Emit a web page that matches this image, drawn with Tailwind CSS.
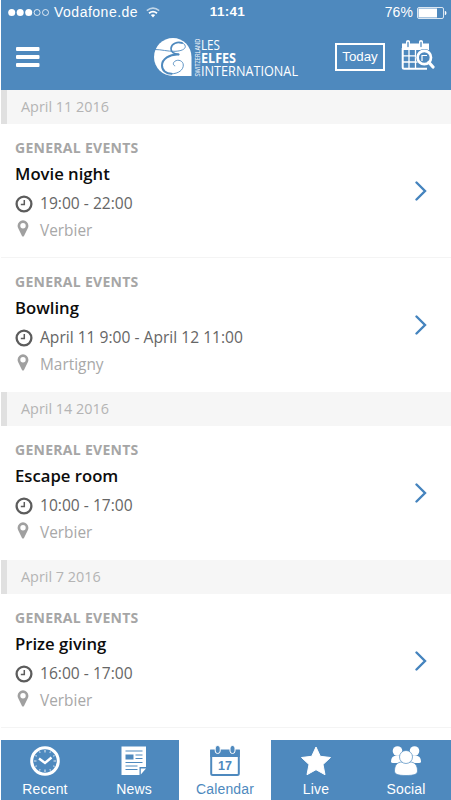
<!DOCTYPE html>
<html lang="en">
<head>
    <meta charset="UTF-8">
    <meta name="viewport" content="width=device-width, initial-scale=1.0">
    <title>Les Elfes - Calendar</title>
    <script src="https://cdn.jsdelivr.net/npm/@tailwindcss/browser@4"></script>
</head>

<body class="bg-white">

    <!-- shared icons -->
    <svg class="hidden">
        <symbol id="clock" viewBox="0 0 18 18">
            <circle cx="9" cy="9" r="7.4" fill="none" stroke="currentColor" stroke-width="2.3"/>
            <path d="M9.3 5v4.6H5.8" fill="none" stroke="currentColor" stroke-width="1.5"/>
        </symbol>
        <symbol id="pin" viewBox="0 0 12 17">
            <path fill="currentColor" fill-rule="evenodd" d="M6 .3a5.400 5.400 0 0 0-5.400 5.400c0 1 .2 1.700.5 2.400L5 15.900c.4.8 1.600.8 2 0l3.900-7.800c.3-.7.5-1.400.5-2.400A5.400 5.400 0 0 0 6 .3zM6 3a2.700 2.700 0 1 1 0 5.400A2.700 2.700 0 0 1 6 3z"/>
        </symbol>
        <symbol id="chevron" viewBox="0 0 12 20">
            <path d="M1.500 1.500 10 10l-8.500 8.500" fill="none" stroke="currentColor" stroke-width="2.400" stroke-linecap="round"/>
        </symbol>
    </svg>

    <div class="w-[451px] h-[800px] pl-px flex flex-col overflow-hidden bg-white font-['Open_Sans',sans-serif] whitespace-nowrap">

        <!-- Header -->
        <header class="h-[90px] shrink-0 bg-[#4e89be] text-white">
            <div class="h-[25px] grid grid-cols-3 items-center pl-[7px] pr-1 font-['Liberation_Sans',sans-serif] text-[14px]">
                <div class="flex items-center">
                    <svg class="w-[42px] h-[9px] shrink-0" viewBox="0 0 42 9" fill="white">
                        <circle cx="3.700" cy="4.500" r="3.500"/>
                        <circle cx="12.200" cy="4.500" r="3.500"/>
                        <circle cx="20.700" cy="4.500" r="3.500"/>
                        <circle cx="29.100" cy="4.500" r="3" fill="none" stroke="white" stroke-width=".8"/>
                        <circle cx="37.500" cy="4.500" r="3" fill="none" stroke="white" stroke-width=".8"/>
                    </svg>
                    <span class="ml-1 tracking-[0.5px]">Vodafone.de</span>
                    <svg class="ml-2 w-[14px] h-[11px] shrink-0" viewBox="0 0 14 11" fill="none" stroke="white">
                        <path d="M.8 3.700Q7-1.300 13.200 3.700" stroke-width="1.600" opacity=".65"/>
                        <path d="M3 6.200q4-3.200 8 0" stroke-width="1.800"/>
                        <path d="M4.800 8.100q2.200-1.600 4.400 0L7 10.500z" fill="white" stroke="none"/>
                    </svg>
                </div>
                <div class="text-center font-bold text-[13.500px] tracking-[0.3px]">11:41</div>
                <div class="flex items-center justify-end">
                    <span class="tracking-[0.1px]">76%</span>
                    <svg class="ml-1 w-[30px] h-[12px]" viewBox="0 0 30 12">
                        <rect x=".5" y=".5" width="26" height="11" rx="1.500" fill="none" stroke="white" stroke-width=".8"/>
                        <rect x="1.500" y="1.500" width="18.500" height="9" fill="white"/>
                        <path d="M27.800 3.800q1.700.5 1.700 2.200t-1.700 2.200z" fill="white"/>
                    </svg>
                </div>
            </div>
            <div class="h-[65px] flex items-start">
                <svg class="ml-[15px] mt-[22px] w-[24px] h-[21px] shrink-0" viewBox="0 0 24 21" fill="white">
                    <rect y="0" width="23.500" height="4" rx="1"/>
                    <rect y="8" width="23.500" height="4" rx="1"/>
                    <rect y="16" width="23.500" height="4" rx="1"/>
                </svg>
                <!-- Logo -->
                <svg class="ml-[112px] mt-[11px] w-[148px] h-[42px] shrink-0 overflow-visible" viewBox="152 36 148 42">
                    <path fill="white" d="M173 38a19 19 0 0 0 0 38h18.500V57A18.500 19 0 0 0 173 38z"/>
                    <g fill="none" stroke="#4e89be" stroke-linecap="round">
                        <path d="M155 49.500c7 0 12 2 20 1.800 6-.2 10.500-2 10.300-5-.2-2.500-3-3.800-6-3.600" stroke-width=".9"/>
                        <path d="M182 42.900c-4.500-1.300-10.500.5-11 5.500-.3 3.500 3 5.800 7.500 6" stroke-width="1.700"/>
                        <path d="M178.500 54.500c-9-.5-16.500 4.700-16.500 11 0 5 4 8.300 9.500 8.300" stroke-width="2"/>
                        <path d="M171.500 73.800c7 0 12-4 11.800-8.800-.2-4.300-5-6-8.500-3.700-2 1.500-2 4 0 4.500" stroke-width=".9"/>
                    </g>
                    <g fill="white" font-family="Open Sans, sans-serif">
                        <text transform="translate(199.500 76.500) rotate(-90)" font-size="8" textLength="38" lengthAdjust="spacingAndGlyphs">SWITZERLAND</text>
                        <text x="201" y="50" font-size="13.800" textLength="19" lengthAdjust="spacingAndGlyphs">LES</text>
                        <text x="201" y="62.800" font-size="13.800" font-weight="700" textLength="35" lengthAdjust="spacingAndGlyphs">ELFES</text>
                        <text x="201" y="76" font-size="13.800" textLength="97" lengthAdjust="spacingAndGlyphs">INTERNATIONAL</text>
                    </g>
                </svg>
                <div class="ml-[35px] mt-[18px] w-[50px] h-[28px] border-2 border-white flex items-center justify-center font-['Liberation_Sans',sans-serif] text-[13.300px]">Today</div>
                <svg class="ml-4 mt-[14px] w-[34px] h-[32px] shrink-0" viewBox="401 39 34 32" fill="none" stroke="white">
                    <path d="M402.700 48v19.200q0 1.500 1.500 1.500H427" stroke-width="2"/>
                    <path d="M402 43.500h4v-2q0-1.500 2-1.500t2 1.500v2h9v-2q0-1.500 2-1.500t2 1.500v2h6v6.500h-27z" fill="white" stroke="none"/>
                    <path d="M408 42.500v4M421 42.500v4" stroke="#4e89be" stroke-width="1.300" stroke-linecap="round"/>
                    <path d="M409 50v18M415.500 50v18M403 55.800h16M403 62h16" stroke-width="1.300"/>
                    <circle cx="424.300" cy="57.500" r="8.500" fill="#4e89be" stroke="none"/>
                    <circle cx="424.300" cy="57.500" r="6.700" stroke-width="2.700"/>
                    <path d="M422 61v-5.500h5" stroke-width="1.200"/>
                    <path d="m429 62.500 4 4.500" stroke-width="3.200" stroke-linecap="round"/>
                </svg>
            </div>
        </header>

        <!-- Event list -->
        <main class="h-[650px] shrink-0 overflow-hidden">
            <div class="h-[34px] bg-[#f6f6f6] border-l-6 border-[#e0e0e0] pl-[14px] flex items-center text-[14.400px] text-[#b4b4b4]">April 11 2016</div>
            <div class="h-[134px] pl-[14px] pr-6 flex items-center justify-between border-b border-[#f4f4f4]">
                <div class="h-full pt-[11px]">
                    <p class="h-[26px] leading-[25px] text-[14px] tracking-[0.280px] font-bold text-[#a6a6a6]">GENERAL EVENTS</p>
                    <p class="h-[26px] leading-[26px] text-[16.700px] font-semibold text-[#0c0c0c]">Movie night</p>
                    <p class="mt-[4px] h-[26px] flex items-center text-[15.600px] text-[#666]"><svg class="w-[18px] h-[18px] mr-[7px] mb-px text-[#5c5c5c]"><use href="#clock"/></svg>19:00 - 22:00</p>
                    <p class="h-[27px] flex items-center text-[15.400px] text-[#a8a8a8]"><svg class="w-3 h-[17px] ml-[2px] mr-[11px] mb-[5px] text-[#a0a0a0]"><use href="#pin"/></svg>Verbier</p>
                </div>
                <svg class="w-3 h-5 text-[#4584be]"><use href="#chevron"/></svg>
            </div>
            <div class="h-[134px] pl-[14px] pr-6 flex items-center justify-between">
                <div class="h-full pt-[11px]">
                    <p class="h-[26px] leading-[25px] text-[14px] tracking-[0.280px] font-bold text-[#a6a6a6]">GENERAL EVENTS</p>
                    <p class="h-[26px] leading-[26px] text-[16.700px] font-semibold text-[#0c0c0c]">Bowling</p>
                    <p class="mt-[4px] h-[26px] flex items-center text-[15.600px] text-[#666]"><svg class="w-[18px] h-[18px] mr-[7px] mb-px text-[#5c5c5c]"><use href="#clock"/></svg>April 11 9:00 - April 12 11:00</p>
                    <p class="h-[27px] flex items-center text-[15.400px] text-[#a8a8a8]"><svg class="w-3 h-[17px] ml-[2px] mr-[11px] mb-[5px] text-[#a0a0a0]"><use href="#pin"/></svg>Martigny</p>
                </div>
                <svg class="w-3 h-5 text-[#4584be]"><use href="#chevron"/></svg>
            </div>

            <div class="h-[34px] bg-[#f6f6f6] border-l-6 border-[#e0e0e0] pl-[14px] flex items-center text-[14.400px] text-[#b4b4b4]">April 14 2016</div>
            <div class="h-[134px] pl-[14px] pr-6 flex items-center justify-between">
                <div class="h-full pt-[11px]">
                    <p class="h-[26px] leading-[25px] text-[14px] tracking-[0.280px] font-bold text-[#a6a6a6]">GENERAL EVENTS</p>
                    <p class="h-[26px] leading-[26px] text-[16.700px] font-semibold text-[#0c0c0c]">Escape room</p>
                    <p class="mt-[4px] h-[26px] flex items-center text-[15.600px] text-[#666]"><svg class="w-[18px] h-[18px] mr-[7px] mb-px text-[#5c5c5c]"><use href="#clock"/></svg>10:00 - 17:00</p>
                    <p class="h-[27px] flex items-center text-[15.400px] text-[#a8a8a8]"><svg class="w-3 h-[17px] ml-[2px] mr-[11px] mb-[5px] text-[#a0a0a0]"><use href="#pin"/></svg>Verbier</p>
                </div>
                <svg class="w-3 h-5 text-[#4584be]"><use href="#chevron"/></svg>
            </div>

            <div class="h-[34px] bg-[#f6f6f6] border-l-6 border-[#e0e0e0] pl-[14px] flex items-center text-[14.400px] text-[#b4b4b4]">April 7 2016</div>
            <div class="h-[134px] pl-[14px] pr-6 flex items-center justify-between border-b border-[#f4f4f4]">
                <div class="h-full pt-[11px]">
                    <p class="h-[26px] leading-[25px] text-[14px] tracking-[0.280px] font-bold text-[#a6a6a6]">GENERAL EVENTS</p>
                    <p class="h-[26px] leading-[26px] text-[16.700px] font-semibold text-[#0c0c0c]">Prize giving</p>
                    <p class="mt-[4px] h-[26px] flex items-center text-[15.600px] text-[#666]"><svg class="w-[18px] h-[18px] mr-[7px] mb-px text-[#5c5c5c]"><use href="#clock"/></svg>16:00 - 17:00</p>
                    <p class="h-[27px] flex items-center text-[15.400px] text-[#a8a8a8]"><svg class="w-3 h-[17px] ml-[2px] mr-[11px] mb-[5px] text-[#a0a0a0]"><use href="#pin"/></svg>Verbier</p>
                </div>
                <svg class="w-3 h-5 text-[#4584be]"><use href="#chevron"/></svg>
            </div>
        </main>

        <!-- Tab bar -->
        <nav class="h-[60px] shrink-0 grid grid-cols-[88px_90px_92px_90px_90px] bg-[#4e89be] text-white font-['Liberation_Sans',sans-serif] text-[14px] tracking-[0.150px] leading-4">
            <a class="flex flex-col items-center pt-[5px]">
                <svg class="w-8 h-8" viewBox="0 0 32 32" fill="none" stroke="white">
                    <circle cx="16" cy="16" r="13.300" stroke-width="3"/>
                    <path d="m10 13.500 6 4.500 6.500-5.500" stroke-width="2.400"/>
                    <path d="M16 5v2.500M16 24.500V27M5 16h2.500M24.500 16H27M10.500 6.500l.7 1.200M21.500 6.500l-.7 1.200M10.500 25.500l.7-1.200M21.500 25.500l-.7-1.200M6.500 21.500l1.200-.7M25.500 21.500l-1.200-.7M6.500 10.500l1.200.7M25.500 10.500l-1.200.7" stroke-width="1.100" opacity=".8"/>
                </svg>
                <span class="mt-[4px]">Recent</span>
            </a>
            <a class="flex flex-col items-center pt-[5px]">
                <svg class="w-8 h-8" viewBox="0 0 32 32">
                    <path fill="white" d="M3.500 1.500H28V22h-6.500v8h-18zM22.800 23.500H28l-5.200 6z"/>
                    <path d="M7.500 6h17M17.500 10h7M17.500 13.500h7M7.500 17.500h17M7.500 21h12M7.500 24.500h12" stroke="#4e89be" stroke-width="1.200"/>
                    <path fill="#4e89be" d="M7.500 9.500h8v5h-8z"/>
                </svg>
                <span class="mt-[4px]">News</span>
            </a>
            <a class="flex flex-col items-center pt-[5px] bg-white text-[#4e89be]">
                <svg class="w-8 h-8" viewBox="0 0 32 32">
                    <path d="M2.200 6h27.600v22.500q0 1.500-1.500 1.500H3.700q-1.500 0-1.500-1.500z" fill="none" stroke="#4e89be" stroke-width="2"/>
                    <path d="M1.200 4.500h29.600V12H1.200z" fill="#4e89be"/>
                    <g fill="#4e89be" stroke="white" stroke-width="1">
                        <rect x="6.200" y=".5" width="5" height="8" rx="2.500"/>
                        <rect x="21" y=".5" width="5" height="8" rx="2.500"/>
                    </g>
                    <text x="16" y="25" text-anchor="middle" font-family="Liberation Sans, sans-serif" font-size="12.500" font-weight="700" fill="#4e89be">17</text>
                </svg>
                <span class="mt-[4px]">Calendar</span>
            </a>
            <a class="flex flex-col items-center pt-[5px]">
                <svg class="w-8 h-8" viewBox="0 0 32 32" fill="white" stroke="white" stroke-linejoin="round">
                    <path d="m16 2 4.300 9.300 10.200 1.200-7.500 7 2 10.200-9-5-9 5 2-10.200-7.500-7 10.200-1.200z"/>
                </svg>
                <span class="mt-[4px]">Live</span>
            </a>
            <a class="flex flex-col items-center pt-[5px]">
                <svg class="w-8 h-8" viewBox="0 0 32 32" fill="white">
                    <circle cx="7.500" cy="6" r="4.800"/>
                    <circle cx="24.500" cy="6" r="4.800"/>
                    <path d="M1 16.500q0-6 6-6h18q6 0 6 6 0 1.500-2 1.500H3q-2 0-2-1.500z"/>
                    <g stroke="#4e89be" stroke-width=".7">
                        <path d="M4.500 26c0-6 3-9 7.500-9h8c4.500 0 7.500 3 7.500 9 0 3-3 4.500-11.500 4.500S4.500 29 4.500 26z"/>
                        <circle cx="16" cy="12" r="6.500"/>
                    </g>
                </svg>
                <span class="mt-[4px]">Social</span>
            </a>
        </nav>
    </div>

</body>
</html>
